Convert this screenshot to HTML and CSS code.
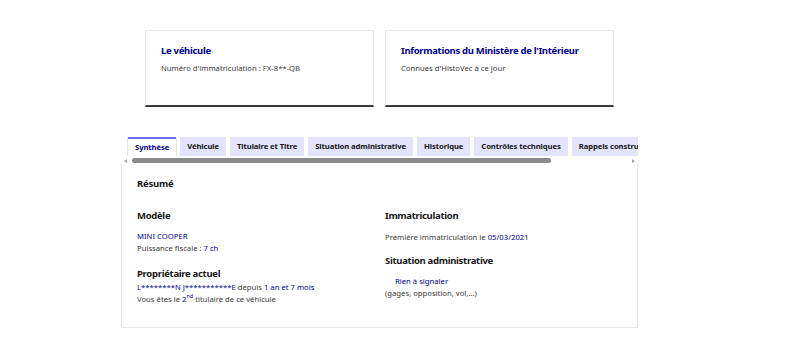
FILE: index.html
```html
<!DOCTYPE html>
<html lang="fr">
<head>
    <meta charset="UTF-8">
    <title>HistoVec - Rapport</title>
    <link rel="stylesheet" href="styles.css">
</head>
<body>
    <div class="page">
        <div class="cards">
            <div class="card">
                <div class="card-title">Le véhicule</div>
                <div class="card-text">Numéro d'immatriculation : FX-8**-QB</div>
            </div>
            <div class="card">
                <div class="card-title">Informations du Ministère de l'Intérieur</div>
                <div class="card-text">Connues d'HistoVec à ce jour</div>
            </div>
        </div>

        <div class="tabs">
            <div class="tab active">Synthèse</div>
            <div class="tab">Véhicule</div>
            <div class="tab">Titulaire et Titre</div>
            <div class="tab">Situation administrative</div>
            <div class="tab">Historique</div>
            <div class="tab">Contrôles techniques</div>
            <div class="tab">Rappels constructeur</div>
        </div>
        <div class="scrollbar">
            <span class="arrow left"></span>
            <div class="track"><div class="thumb"></div></div>
            <span class="arrow right"></span>
        </div>

        <div class="panel">
            <h2>Résumé</h2>
            <div class="cols">
                <div class="col">
                    <h3>Modèle</h3>
                    <div class="line blue">MINI COOPER</div>
                    <div class="line">Puissance fiscale : <span class="blue">7 ch</span></div>
                    <h3 class="tight">Propriétaire actuel</h3>
                    <div class="line"><span class="blue">L********N J***********E</span> depuis <span class="blue">1 an et 7 mois</span></div>
                    <div class="line">Vous êtes le <span class="blue">2<sup>nd</sup></span> titulaire de ce véhicule</div>
                </div>
                <div class="col">
                    <h3 class="first">Immatriculation</h3>
                    <div class="line">Première immatriculation le <span class="blue">05/03/2021</span></div>
                    <h3 class="second">Situation administrative</h3>
                    <div class="line blue indent">Rien à signaler</div>
                    <div class="line">(gages, opposition, vol,...)</div>
                </div>
            </div>
        </div>
    </div>
</body>
</html>
```

FILE: styles.css
```css
body {
    margin: 0;
    font-family: 'Noto Sans', sans-serif;
    background: #fff;
    color: #3a3a3a;
}
.page {
    width: 517px;
    margin-left: 121px;
}
.cards {
    display: flex;
    gap: 11px;
    padding: 30px 0 0 24px;
}
.card {
    box-sizing: border-box;
    width: 229px;
    height: 77px;
    padding: 13px 15px 0;
    border: 1px solid #e5e5e5;
    border-bottom: 2px solid #3a3a3a;
}
.card-title {
    color: #000091;
    font-weight: bold;
    font-size: 9.5px;
    line-height: 14px;
    letter-spacing: -0.3px;
    white-space: nowrap;
}
.card-text {
    font-size: 7.7px;
    line-height: 12px;
    margin-top: 4px;
}
.tabs {
    display: flex;
    gap: 4px;
    padding-left: 7px;
    margin-top: 30px;
    overflow: hidden;
    white-space: nowrap;
}
.tab {
    background: #e3e3fd;
    color: #161616;
    font-size: 7.7px;
    font-weight: bold;
    letter-spacing: -0.1px;
    padding: 0 7px;
    height: 19px;
    line-height: 19px;
    flex: none;
}
.tab.active {
    background: #fff;
    color: #000091;
    border-top: 2px solid #6a6af4;
    height: 17px;
    line-height: 17px;
    box-shadow: 1px 0 0 #e5e5e5, -1px 0 0 #e5e5e5;
}
.scrollbar {
    display: flex;
    align-items: center;
    height: 7px;
    margin-top: 1px;
}
.arrow {
    width: 0;
    height: 0;
    border-top: 2px solid transparent;
    border-bottom: 2px solid transparent;
    margin: 0 3px;
}
.arrow.left {
    border-right: 3px solid #a3a3a3;
}
.arrow.right {
    border-left: 3px solid #a3a3a3;
}
.track {
    flex: 1;
}
.thumb {
    width: 419px;
    height: 5px;
    background: #8a8a8a;
    border-radius: 3px;
    margin-left: 2px;
}
.panel {
    box-sizing: border-box;
    height: 164px;
    border: 1px solid #e5e5e5;
    border-top: none;
    padding: 13px 15px 0;
}
h2 {
    font-size: 9.5px;
    line-height: 14px;
    letter-spacing: -0.2px;
    color: #161616;
    margin: 0;
}
.cols {
    display: flex;
    margin-top: 18px;
}
.col {
    flex: none;
    width: 248px;
}
.col + .col {
    flex: 1;
    width: auto;
}
h3 {
    font-size: 9.5px;
    line-height: 14px;
    letter-spacing: -0.3px;
    color: #161616;
    margin: 0 0 7px;
}
h3.tight {
    margin: 13px 0 0;
}
h3.first {
    margin-bottom: 8px;
}
h3.second {
    margin: 11px 0 7px;
}
.line {
    font-size: 7.7px;
    line-height: 12px;
}
.blue {
    color: #000091;
}
.indent {
    padding-left: 10px;
}
sup {
    font-size: 5.5px;
    line-height: 0;
}
```
